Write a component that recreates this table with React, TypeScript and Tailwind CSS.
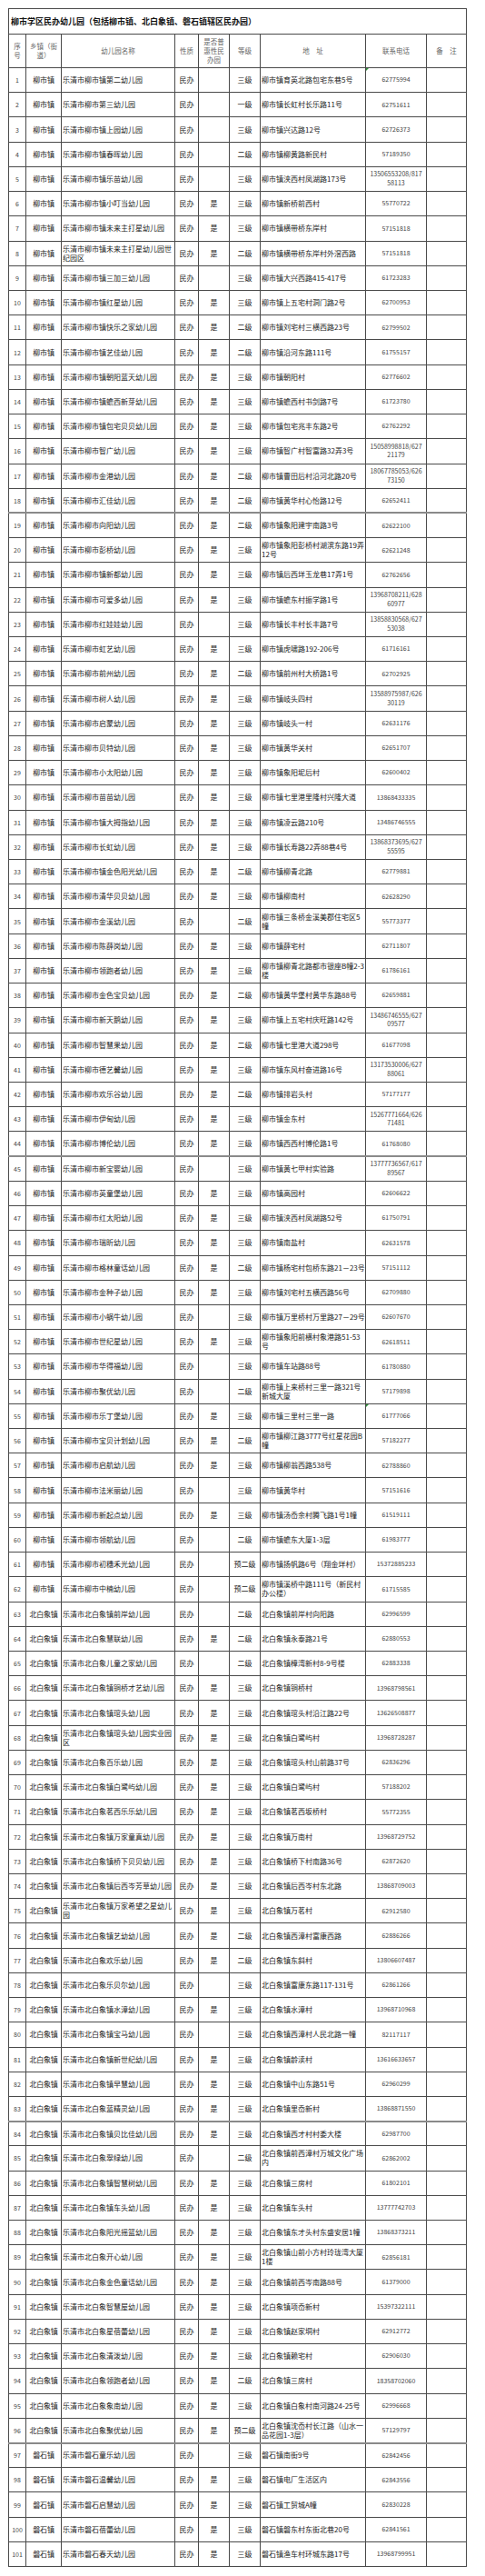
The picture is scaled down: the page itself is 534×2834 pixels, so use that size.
const ROWS = `1|柳市镇|乐清市柳市镇第二幼儿园||三级|柳市镇育英北路包宅东巷5号|62775994
2|柳市镇|乐清市柳市第三幼儿园||一级|柳市镇长虹村长乐路11号|62751611
3|柳市镇|乐清市柳市镇上园幼儿园||三级|柳市镇兴达路12号|62726373
4|柳市镇|乐清市柳市镇春晖幼儿园||二级|柳市镇柳黄路新民村|57189350
5|柳市镇|乐清市柳市镇乐苗幼儿园||三级|柳市镇浃西村凤湖路173号|13506553208/817~58113
6|柳市镇|乐清市柳市镇小叮当幼儿园|是|三级|柳市镇新桥前西村|55770722
7|柳市镇|乐清市柳市镇未来主打星幼儿园|是|三级|柳市镇横带桥东岸村|57151818
8|柳市镇|乐清市柳市镇未来主打星幼儿园世~纪园区|是|二级|柳市镇横带桥东岸村外滘西路|57151818
9|柳市镇|乐清市柳市镇三加三幼儿园||三级|柳市镇大兴西路415-417号|61723283
10|柳市镇|乐清市柳市镇红星幼儿园|是|三级|柳市镇上五宅村洞门路2号|62700953
11|柳市镇|乐清市柳市镇快乐之家幼儿园|是|二级|柳市镇刘宅村三横西路23号|62799502
12|柳市镇|乐清市柳市镇艺佳幼儿园|是|二级|柳市镇沿河东路111号|61755157
13|柳市镇|乐清市柳市镇朝阳蓝天幼儿园|是|三级|柳市镇朝阳村|62776602
14|柳市镇|乐清市柳市镇蟾西新芽幼儿园|是|三级|柳市镇蟾西村书剑路7号|61723780
15|柳市镇|乐清市柳市镇包宅贝贝幼儿园|是|三级|柳市镇包宅兆丰东路2号|62762292
16|柳市镇|乐清市柳市智广幼儿园|是|三级|柳市镇智广村智富路32弄3号|15058998818/627~21179
17|柳市镇|乐清市柳市金港幼儿园|是|二级|柳市镇曹田后村沿河北路20号|18067785053/626~73150
18|柳市镇|乐清市柳市汇佳幼儿园|是|二级|柳市镇黄华村心怡路12号|62652411
19|柳市镇|乐清市柳市向阳幼儿园|是|二级|柳市镇象阳建宇南路3号|62622100
20|柳市镇|乐清市柳市彭桥幼儿园|是|三级|柳市镇象阳彭桥村湖滨东路19弄~12号|62621248
21|柳市镇|乐清市柳市镇新都幼儿园|是|三级|柳市镇后西垟玉龙巷17弄1号|62762656
22|柳市镇|乐清市柳市可爱多幼儿园|是|三级|柳市镇蟾东村振学路1号|13968708211/628~60977
23|柳市镇|乐清市柳市红娃娃幼儿园||三级|柳市镇长丰村长丰路7号|13858830568/627~53038
24|柳市镇|乐清市柳市虹艺幼儿园|是|三级|柳市镇虎啸路192-206号|61716161
25|柳市镇|乐清市柳市前州幼儿园|是|二级|柳市镇前州村大桥路1号|62702925
26|柳市镇|乐清市柳市树人幼儿园|是|三级|柳市镇岐头四村|13588975987/626~30119
27|柳市镇|乐清市柳市启蒙幼儿园|是|三级|柳市镇岐头一村|62631176
28|柳市镇|乐清市柳市贝特幼儿园|是|三级|柳市镇黄华关村|62651707
29|柳市镇|乐清市柳市小太阳幼儿园|是|三级|柳市镇象阳坭后村|62600402
30|柳市镇|乐清市柳市苗苗幼儿园|是|三级|柳市镇七里港里隆村兴隆大道|13868433335
31|柳市镇|乐清市柳市镇大拇指幼儿园|是|三级|柳市镇凌云路210号|13486746555
32|柳市镇|乐清市柳市长虹幼儿园|是|三级|柳市镇长寿路22弄88巷4号|13868373695/627~55595
33|柳市镇|乐清市柳市镇金色阳光幼儿园|是|二级|柳市镇柳青北路|62779881
34|柳市镇|乐清市柳市清华贝贝幼儿园|是|三级|柳市镇柳南村|62628290
35|柳市镇|乐清市柳市金溪幼儿园||二级|柳市镇三条桥金溪美郡住宅区5~幢|55773377
36|柳市镇|乐清市柳市陈薛岗幼儿园|是|三级|柳市镇薛宅村|62711807
37|柳市镇|乐清市柳市领跑者幼儿园|是|三级|柳市镇柳青北路都市银座B幢2-3~楼|61786161
38|柳市镇|乐清市柳市金色宝贝幼儿园|是|二级|柳市镇黄华堡村黄华东路88号|62659881
39|柳市镇|乐清市柳市新天鹅幼儿园|是|三级|柳市镇上五宅村庆旺路142号|13486746555/627~09577
40|柳市镇|乐清市柳市智慧果幼儿园|是|二级|柳市镇七里港大道298号|61677098
41|柳市镇|乐清市柳市德艺馨幼儿园|是|三级|柳市镇东风村奋进路16号|13173530006/627~88061
42|柳市镇|乐清市柳市欢乐谷幼儿园|是|二级|柳市镇排岩头村|57177177
43|柳市镇|乐清市柳市伊甸幼儿园|是|三级|柳市镇金东村|15267771664/626~71481
44|柳市镇|乐清市柳市博伦幼儿园|是|三级|柳市镇西西村博伦路1号|61768080
45|柳市镇|乐清市柳市新宝婴幼儿园||三级|柳市镇黄七甲村实验路|13777736567/617~89567
46|柳市镇|乐清市柳市英童堡幼儿园|是|三级|柳市镇高园村|62606622
47|柳市镇|乐清市柳市红太阳幼儿园|是|三级|柳市镇浃西村凤湖路52号|61750791
48|柳市镇|乐清市柳市瑞昕幼儿园|是|三级|柳市镇南盐村|62631578
49|柳市镇|乐清市柳市格林童话幼儿园|是|二级|柳市镇杨宅村包桥东路21－23号|57151112
50|柳市镇|乐清市柳市金种子幼儿园|是|三级|柳市镇刘宅村五横西路56号|62709880
51|柳市镇|乐清市柳市小蜗牛幼儿园||三级|柳市镇万里桥村万里路27－29号|62607670
52|柳市镇|乐清市柳市世纪星幼儿园|是|三级|柳市镇象阳前横村象港路51-53~号|62618511
53|柳市镇|乐清市柳市华得福幼儿园||三级|柳市镇车站路88号|61780880
54|柳市镇|乐清市柳市聚优幼儿园||二级|柳市镇上来桥村三里一路321号~新城大厦|57179898
55|柳市镇|乐清市柳市乐丁堡幼儿园|是|三级|柳市镇三里村三里一路|61777066
56|柳市镇|乐清市柳市宝贝计划幼儿园|是|二级|柳市镇柳江路3777号红星花园B~幢|57182277
57|柳市镇|乐清市柳市启航幼儿园|是|三级|柳市镇柳翁西路538号|62788860
58|柳市镇|乐清市柳市法米丽幼儿园||三级|柳市镇黄华村|57151616
59|柳市镇|乐清市柳市新起点幼儿园|是|三级|柳市镇汤岙余村腾飞路1号1幢|61519111
60|柳市镇|乐清市柳市领航幼儿园||二级|柳市镇蟾东大厦1-3层|61983777
61|柳市镇|乐清市柳市初穗禾光幼儿园||预二级|柳市镇扬帆路6号（翔金垟村）|15372885233
62|柳市镇|乐清市柳市中楠幼儿园||预二级|柳市镇溪桥中路111号（新民村~办公楼）|61715585
63|北白象镇|乐清市北白象镇前岸幼儿园||二级|北白象镇前岸村向阳路|62996599
64|北白象镇|乐清市北白象慧联幼儿园|是|二级|北白象镇永泰路21号|62880553
65|北白象镇|乐清市北白象儿童之家幼儿园||二级|北白象镇樟湾新村8-9号楼|62883338
66|北白象镇|乐清市北白象镇铜桥才艺幼儿园|是|三级|北白象镇铜桥村|13968798561
67|北白象镇|乐清市北白象镇琯头幼儿园|是|三级|北白象镇琯头村沿江路22号|13626508877
68|北白象镇|乐清市北白象镇琯头幼儿园实业园~区|是|三级|北白象镇白鹭屿村|13968728287
69|北白象镇|乐清市北白象百乐幼儿园|是|三级|北白象镇琯头村山前路37号|62836296
70|北白象镇|乐清市北白象镇白鹭屿幼儿园|是|三级|北白象镇白鹭屿村|57188202
71|北白象镇|乐清市北白象茗西乐乐幼儿园|是|三级|北白象镇茗西坂桥村|55772355
72|北白象镇|乐清市北白象镇万家童真幼儿园|是|三级|北白象镇万南村|13968729752
73|北白象镇|乐清市北白象镇桥下贝贝幼儿园|是|三级|北白象镇桥下村南路36号|62872620
74|北白象镇|乐清市北白象镇后西岑芳草幼儿园|是|三级|北白象镇后西岑村东北路|13868709003
75|北白象镇|乐清市北白象镇万家希望之星幼儿~园|是|三级|北白象镇万茗村|62912580
76|北白象镇|乐清市北白象镇艺幼幼儿园|是|二级|北白象镇西漳村富康西路|62886266
77|北白象镇|乐清市北白象欢乐幼儿园|是|二级|北白象镇东斜村|13806607487
78|北白象镇|乐清市北白象乐贝尔幼儿园||三级|北白象镇富康东路117-131号|62861266
79|北白象镇|乐清市北白象镇水漳幼儿园|是|三级|北白象镇水漳村|13968710968
80|北白象镇|乐清市北白象镇宝马幼儿园||三级|北白象镇西漳村人民北路一幢|82117117
81|北白象镇|乐清市北白象镇新世纪幼儿园|是|三级|北白象镇龄渎村|13616633657
82|北白象镇|乐清市北白象镇早慧幼儿园|是|三级|北白象镇中山东路51号|62960299
83|北白象镇|乐清市北白象蓝精灵幼儿园|是|三级|北白象镇里岙新村|13868871550
84|北白象镇|乐清市北白象镇贝比佳幼儿园|是|三级|北白象镇西才村村委大楼|62987700
85|北白象镇|乐清市北白象翠绿幼儿园||二级|北白象镇前西漳村万城文化广场~内|62862002
86|北白象镇|乐清市北白象镇智慧树幼儿园|是|三级|北白象镇三房村|61802101
87|北白象镇|乐清市北白象镇车头幼儿园|是|三级|北白象镇车头村|13777742703
88|北白象镇|乐清市北白象阳光摇篮幼儿园|是|三级|北白象镇东才头村东盛安居1幢|13868373211
89|北白象镇|乐清市北白象开心幼儿园|是|三级|北白象镇山前小方村玲珑湾大厦~1楼|62856181
90|北白象镇|乐清市北白象金色童话幼儿园|是|三级|北白象镇前西岑南路88号|61379000
91|北白象镇|乐清市北白象智慧屋幼儿园|是|三级|北白象镇项岙新村|15397322111
92|北白象镇|乐清市北白象星蓓蕾幼儿园|是|三级|北白象镇赵家垌村|62912772
93|北白象镇|乐清市北白象清泼幼儿园|是|三级|北白象镇赖宅村|62906030
94|北白象镇|乐清市北白象领跑者幼儿园|是|二级|北白象镇三房村|18358702060
95|北白象镇|乐清市北白象象南幼儿园|是|三级|北白象镇白象村南河路24-25号|62996668
96|北白象镇|乐清市北白象聚优幼儿园|是|预二级|北白象镇沈岙村长江路（山水一~品花园1-3层）|57129797
97|磐石镇|乐清市磐石童乐幼儿园||三级|磐石镇南街9号|62842456
98|磐石镇|乐清市磐石温馨幼儿园|是|三级|磐石镇电厂生活区内|62843556
99|磐石镇|乐清市磐石启慧幼儿园|是|三级|磐石镇工贸城A幢|62830228
100|磐石镇|乐清市磐石蓓蕾幼儿园|是|三级|磐石镇磐东村东街北巷20号|62841561
101|磐石镇|乐清市磐石春天幼儿园|是|三级|磐石镇渔车村环城东路17号|13968799951`;

type Row = {
  no: string;
  town: string;
  name: string;
  puhui: string;
  level: string;
  addr: string;
  phone: string;
};

const rows: Row[] = ROWS.split('\n').map((line) => {
  const [no, town, name, puhui, level, addr, phone] = line.split('|').map((s) => s.replace(/~/g, '\n'));
  return { no, town, name, puhui, level, addr, phone };
});

// rows that start after a page break in the source sheet (heavier grey rule on top)
const breakRows = new Set(['19', '45', '84', '97']);
const markRows = new Set(['1', '55']);

const font = { fontFamily: '"Noto Sans CJK SC", "Noto Sans", sans-serif' };

const cell = 'border border-[#4a4a4a] p-0 align-middle whitespace-pre-line overflow-hidden';

export default function App() {
  return (
    <div className="bg-white min-h-[2834px] pl-[9px] pt-[9px]" style={font}>
      <table className="table-fixed border-collapse w-[504px] text-[#222]">
        <colgroup>
          <col className="w-[19px]" />
          <col className="w-[39px]" />
          <col className="w-[125px]" />
          <col className="w-[26px]" />
          <col className="w-[34px]" />
          <col className="w-[34px]" />
          <col className="w-[116px]" />
          <col className="w-[67px]" />
          <col className="w-[44px]" />
        </colgroup>
        <tbody>
          <tr>
            <td colSpan={9} className={`${cell} h-[28px] pl-[2px] text-[9px] font-bold text-[#111] leading-none`}>
              柳市学区民办幼儿园（包括柳市镇、北白象镇、磐石镇辖区民办园）
            </td>
          </tr>
          <tr className="text-[7.5px] leading-[10px] text-[#666] text-center">
            <td className={`${cell} h-[37px]`}>{'序\n号'}</td>
            <td className={cell}>{'乡镇（街\n道）'}</td>
            <td className={cell}>幼儿园名称</td>
            <td className={cell}>性质</td>
            <td className={cell}>{'是否普\n惠性民\n办园'}</td>
            <td className={cell}>等级</td>
            <td className={cell}>地　址</td>
            <td className={cell}>联系电话</td>
            <td className={cell}>备　注</td>
          </tr>
          {rows.map((r) => {
            const top = breakRows.has(r.no) ? ' border-t-2 border-t-[#8a8a8a]' : '';
            return (
              <tr key={r.no} className="text-[8px] leading-[10px]">
                <td className={`${cell}${top} h-[27.22px] text-center text-[7px] text-[#444]`}>{r.no}</td>
                <td className={`${cell}${top} text-center tracking-[-0.2px]`}>{r.town}</td>
                <td className={`${cell}${top} pl-[1px]`}>{r.name}</td>
                <td className={`${cell}${top} text-center`}>民办</td>
                <td className={`${cell}${top} text-center`}>{r.puhui}</td>
                <td className={`${cell}${top} text-center`}>{r.level}</td>
                <td className={`${cell}${top} pl-[1px]`}>{r.addr}</td>
                <td className={`${cell}${top} relative text-center text-[7px] leading-[9.5px] text-[#444]`}>
                  {markRows.has(r.no) && (
                    <span className="absolute left-0 top-0 w-0 h-0 border-t-[3px] border-t-[#2f8f3a] border-r-[3px] border-r-transparent" />
                  )}
                  {r.phone}
                </td>
                <td className={`${cell}${top}`}></td>
              </tr>
            );
          })}
        </tbody>
      </table>
    </div>
  );
}
